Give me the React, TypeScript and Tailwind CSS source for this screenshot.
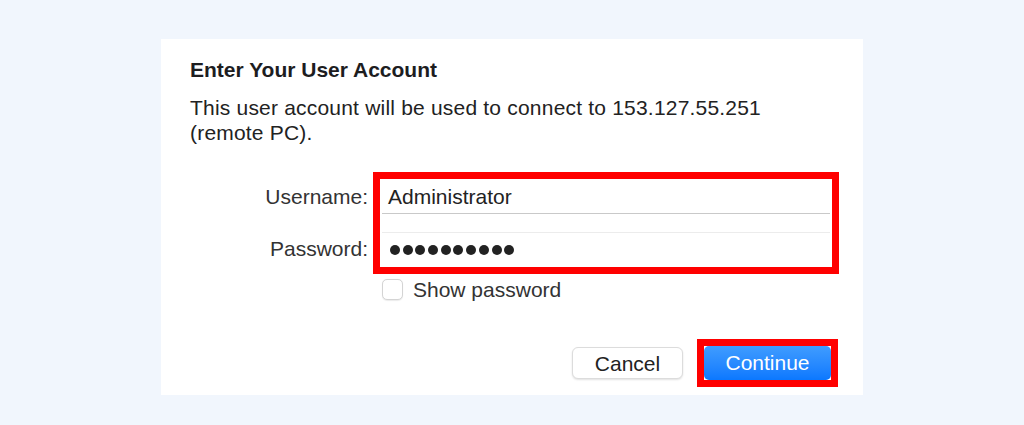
import React, { useState } from 'react';

const App = () => {
  const [showPassword, setShowPassword] = useState(false);

  return (
    <div
      className="w-full h-[425px] bg-[#f1f6fd] flex justify-center pt-[39px] text-[#222]"
      style={{ fontFamily: '"Liberation Sans", Arial, sans-serif' }}
    >
      {/* Dialog */}
      <div className="w-[702px] h-[356px] bg-white flex flex-col">
        {/* Title + description */}
        <h2 className="pl-[29px] pt-[18px] text-[21px] leading-[26px] font-bold text-[#1d1d1f]">
          Enter Your User Account
        </h2>
        <p className="pl-[29px] mt-[12px] text-[21px] leading-[25px] tracking-[0.2px] text-[#222]">
          This user account will be used to connect to 153.127.55.251
          <br />
          (remote PC).
        </p>

        {/* Fields */}
        <div className="flex mt-[27px]">
          <div className="w-[207px] flex flex-col gap-[18px] pt-[8px] text-[21px] text-[#333]">
            <label className="h-[34px] flex items-center justify-end">Username:</label>
            <label className="h-[34px] flex items-center justify-end">Password:</label>
          </div>

          {/* red highlight */}
          <div className="ml-[5px] w-[466px] h-[102px] border-[7px] border-[#ff0000] flex flex-col gap-[18px] px-[2px] pt-[1px]">
            <div className="h-[34px] flex items-center pl-[6px] border-b border-[#c9c9c9] text-[21px] text-[#222]">
              Administrator
            </div>
            <div className="h-[34px] flex items-center pl-[8px] gap-[2.7px] border-t border-[#ececec]">
              {showPassword ? (
                <span className="text-[21px]">password12</span>
              ) : (
                Array.from({ length: 10 }).map((_, i) => (
                  <span key={i} className="w-[10px] h-[10px] rounded-full bg-[#222]" />
                ))
              )}
            </div>
          </div>
        </div>

        {/* Show password */}
        <div className="flex items-center mt-[5px] pl-[221px] h-[21px]">
          <button
            type="button"
            onClick={() => setShowPassword(!showPassword)}
            className="w-[21px] h-[21px] rounded-[5px] border border-[#d4d4d4] bg-white shadow-[0_0.5px_1px_rgba(0,0,0,0.08)]"
          />
          <span className="ml-[10px] text-[21px] text-[#333]">Show password</span>
        </div>

        {/* Buttons */}
        <div className="flex justify-end items-center mt-[39px] pr-[25px] gap-[14px]">
          <button
            type="button"
            className="w-[111px] h-[32px] rounded-[6px] bg-white border border-[#dcdcdc] shadow-[0_1px_2px_rgba(0,0,0,0.12)] text-[21px] text-[#222]"
          >
            Cancel
          </button>
          <div className="border-[7px] border-[#ff0000] w-[141px] h-[48px] flex">
            <button
              type="submit"
              className="w-full h-full rounded-[5px] bg-gradient-to-b from-[#3f9cff] to-[#0a78ff] text-white text-[21px]"
            >
              Continue
            </button>
          </div>
        </div>
      </div>
    </div>
  );
};

export default App;
